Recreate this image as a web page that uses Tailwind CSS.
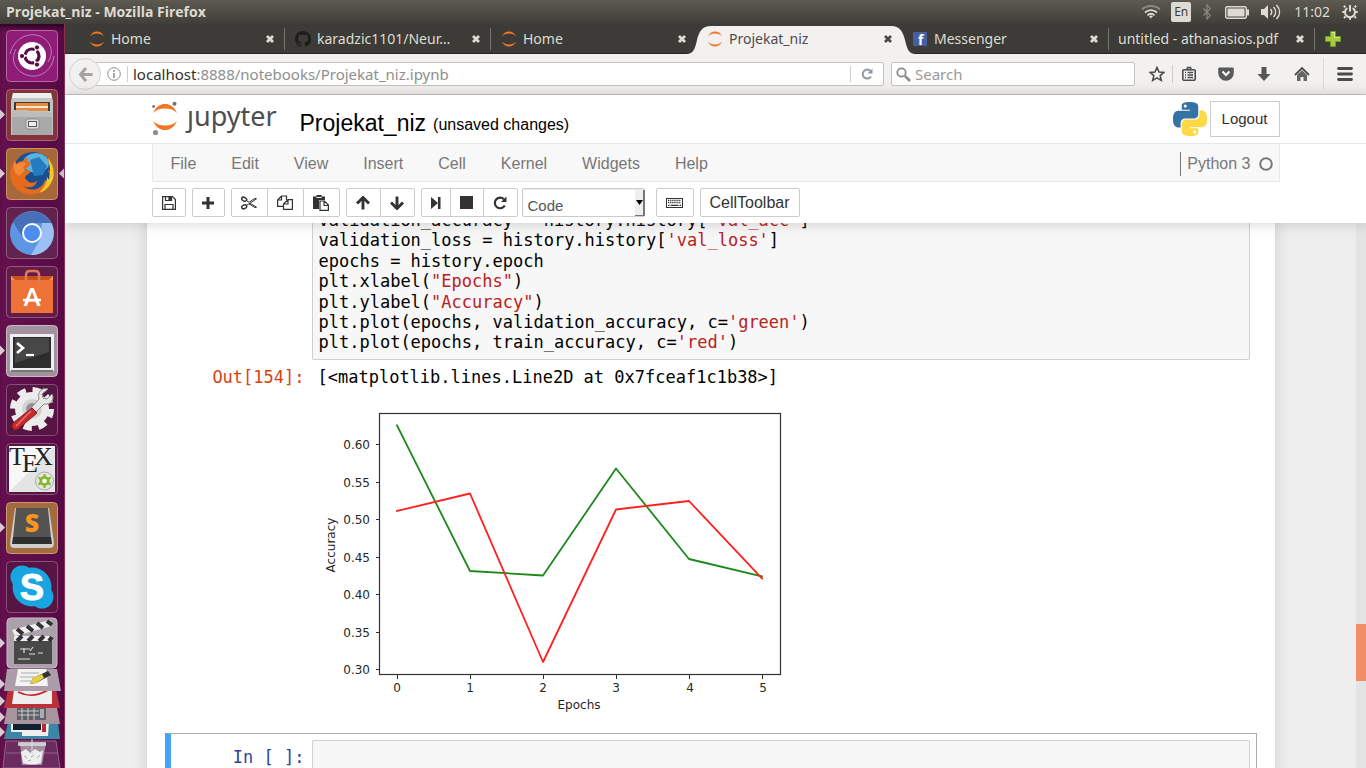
<!DOCTYPE html>
<html lang="en">
<head>
<meta charset="utf-8">
<title>Projekat_niz - Mozilla Firefox</title>
<script src="https://cdn.jsdelivr.net/npm/@tailwindcss/browser@4"></script>
</head>
<body class="h-screen flex flex-col overflow-hidden bg-[#eeeeee] font-['Noto_Sans',sans-serif] text-sm">

<svg class="hidden" aria-hidden="true">
  <symbol id="jup" viewBox="0 0 16 16">
    <path fill="#f37726" d="M1 5.6C2.3 2.3 4.900 .4 8 .4s5.700 1.900 7 5.200C13.300 3.800 11 2.500 8 2.500S2.700 3.800 1 5.600z"/>
    <path fill="#f37726" d="M1 10.400c1.300 3.300 3.900 5.200 7 5.200s5.700-1.900 7-5.200c-1.700 1.800-4 3.100-7 3.100s-5.300-1.300-7-3.100z"/>
  </symbol>
  <symbol id="x" viewBox="0 0 10 10"><path d="M2 2l6 6M8 2l-6 6" stroke="currentColor" stroke-width="2.800"/></symbol>
  <linearGradient id="glass" x1="0" y1="0" x2="0" y2="1"><stop offset="0" stop-color="#fff" stop-opacity=".45"/><stop offset=".5" stop-color="#fff" stop-opacity=".12"/><stop offset="1" stop-color="#fff" stop-opacity=".1"/></linearGradient>
</svg>

<header class="h-6 shrink-0 flex items-center justify-between bg-linear-to-b from-[#5d5a50] to-[#3f3e39] pl-[6px] pr-2 text-[#dfdbd2]">
  <h1 class="font-bold text-sm font-['Open_Sans',sans-serif]">Projekat_niz - Mozilla Firefox</h1>
  <div class="flex items-center">
    <svg class="w-5 h-4 mr-[10px]" viewBox="0 0 20 16" fill="none" stroke="#dfdbd2" stroke-width="1.800"><path d="M1 5.500C6 .8 14 .8 19 5.500" stroke="#8d897f"/><path d="M4 8.500c3.500-3.300 8.500-3.300 12 0"/><path d="M6.500 11.300c2.200-2 4.800-2 7 0"/><path d="M10 14.500l-2-2.300c1.300-1 2.700-1 4 0z" fill="#dfdbd2" stroke="none"/></svg>
    <span class="w-5 h-5 rounded-xs bg-[#dfdbd2] text-[#3f3e39] text-xs leading-5 text-center mr-3">En</span>
    <svg class="w-2 h-4 mr-[14px]" viewBox="0 0 8 16" fill="none" stroke="#8d897f" stroke-width="1.200"><path d="M.5 4.500l7 7L4 15V1l3.500 3.500-7 7"/></svg>
    <svg class="w-6 h-4 mr-3" viewBox="0 0 24 16"><rect x=".7" y="2.700" width="20.600" height="11.600" rx="1.500" fill="none" stroke="#dfdbd2" stroke-width="1.400"/><rect x="2.500" y="4.500" width="17" height="8" fill="#dfdbd2"/><path d="M22 5.500h2v6h-2z" fill="#dfdbd2"/></svg>
    <svg class="w-5 h-4 mr-[13px]" viewBox="0 0 20 16"><path d="M0 5h3l4-4v14l-4-4H0z" fill="#dfdbd2"/><path d="M9.500 5c1.500 1.800 1.500 4.200 0 6M12.500 3c2.800 3 2.800 7 0 10M15.500 1c4 4.300 4 9.700 0 14" fill="none" stroke="#dfdbd2" stroke-width="1.500"/></svg>
    <time class="mr-3">11:02</time>
    <svg class="w-4 h-4" viewBox="0 0 16 16" fill="none" stroke="#dfdbd2"><path d="M5.300 4a5 5 0 1 0 5.400 0" stroke-width="2"/><path d="M8 1v6.500" stroke-width="2"/><path d="M3.300 3.300L1.800 1.800M12.700 3.300l1.500-1.500M2.500 8H.3M13.500 8h2.200M3.500 12.500l-1.500 1.500M12.500 12.500l1.500 1.500M8 13.500v2.300" stroke-width="2"/></svg>
  </div>
</header>

<div class="flex-1 min-h-0 flex">

<nav aria-label="Launcher" class="w-[65px] shrink-0 bg-[#5a0c47] bg-linear-to-r from-[#64104e] to-[#580a45] border-r border-[#8d2f52] shadow-[inset_0_6px_5px_-3px_#2a0520] flex flex-col items-center gap-[7px] pt-[6px] pr-0 relative overflow-hidden">
  <button aria-label="Dash" class="w-[52px] h-[52px] shrink-0"><svg viewBox="0 0 52 52"><rect x=".5" y=".5" width="51" height="51" rx="4" fill="#8f1d78" stroke="#b766a6"/><rect x="1" y="1" width="50" height="50" rx="4" fill="url(#glass)"/><path d="M4 24C8 8 22 2 34 6c10 4 15 16 8 26M48 26c-2 16-16 23-27 19C9 41 4 30 10 19" stroke="#c27fb5" fill="none" stroke-width="1"/><circle cx="26" cy="26" r="14" fill="#fff"/><circle cx="26" cy="26" r="7" fill="none" stroke="#5a0c47" stroke-width="3.200" stroke-dasharray="12.600 2" stroke-dashoffset="6"/><circle cx="16" cy="26" r="2.600" fill="#5a0c47" stroke="#fff"/><circle cx="31" cy="17.400" r="2.600" fill="#5a0c47" stroke="#fff"/><circle cx="31" cy="34.600" r="2.600" fill="#5a0c47" stroke="#fff"/></svg></button>
  <button aria-label="Files" class="w-[52px] h-[52px] shrink-0"><svg viewBox="0 0 52 52"><rect x=".5" y=".5" width="51" height="51" rx="4" fill="#84333c" stroke="#a86a72"/><rect x="1" y="1" width="50" height="50" rx="4" fill="url(#glass)"/><path d="M7 4h38l2 8v34H5V12z" fill="#c4c4c4"/><path d="M7 4h38l1 5H6z" fill="#ededed"/><path d="M8 13h36v9H8z" fill="#3b3b3b"/><path d="M10 14h32v8H10z" fill="#e58a3d"/><path d="M10 17h32v2H10z" fill="#f7e4cd"/><path d="M6 21h16l2 2h22v23H6z" fill="#a9a9a9"/><path d="M6 21h16l2 2h22v5H6z" fill="#bcbcbc"/><rect x="20" y="30" width="13" height="10" rx="2" fill="#dedede" stroke="#8b8b8b"/><rect x="22.500" y="32.500" width="8" height="5" fill="#eee" stroke="#555"/></svg></button>
  <button aria-label="Firefox" class="w-[52px] h-[52px] shrink-0"><svg viewBox="0 0 52 52"><rect x=".5" y=".5" width="51" height="51" rx="4" fill="#a8683a" stroke="#c69667"/><rect x="1" y="1" width="50" height="50" rx="4" fill="url(#glass)" opacity=".5"/><circle cx="27" cy="24" r="20" fill="#1b4e90"/><ellipse cx="30" cy="15" rx="13" ry="10" fill="#5ab4e2"/><path d="M24 12l9-3 8 9-4 9-9 1z" fill="#247cc0"/><path d="M43 11c6 9 5 21-2 28-9 10-24 10-32 0C2 31 3 20 9 12l1 4c2-2 4-3 7-3l4-4c0 4 1 5 4 6-1 3-4 4-6 6 2 2 4 2 6 2-1 3-5 3-6 7 3 5 8 6 12 3-1 7-11 8-15 4 8 8 20 5 23-5 2 1 2 3 2 4 3-4 3-10 1-14l2 1c0-5-1-8-2-11z" fill="#e56a1c"/><path d="M42 10c7 8 8 20 1 28-3 4-7 6-10 7 5-5 8-10 8-16l2 3c2-8 1-14-1-22z" fill="#f8c928"/><path d="M9 13l1 4c3-2 6-3 8-3l2 2-3 3 2 3-6 6c-5-3-7-8-4-15z" fill="#f38a35"/></svg></button>
  <button aria-label="Chromium" class="w-[52px] h-[52px] shrink-0"><svg viewBox="0 0 52 52"><rect x=".5" y=".5" width="51" height="51" rx="4" fill="#63234f" stroke="#8f5c80"/><rect x="1" y="1" width="50" height="50" rx="4" fill="url(#glass)"/><circle cx="26" cy="26" r="22" fill="#5e96e4"/><path d="M7 15A22 22 0 0 1 45 16H26L17 31z" fill="#466fb7"/><path d="M45.300 16A22 22 0 0 1 25 48l10-17 1-15z" fill="#9cc0f5"/><circle cx="26" cy="26" r="10" fill="#fff"/><circle cx="26" cy="26" r="8" fill="#4d8bee"/></svg></button>
  <button aria-label="Ubuntu Software" class="w-[52px] h-[52px] shrink-0"><svg viewBox="0 0 52 52"><rect x=".5" y=".5" width="51" height="51" rx="4" fill="#641c46" stroke="#8f5c80"/><rect x="1" y="1" width="50" height="50" rx="4" fill="url(#glass)"/><path d="M5 10h42v10H5z" fill="#c9521c"/><path d="M5 14h42v33H5z" fill="#ee7136"/><path d="M5 10l4 4H5zM47 10l-4 4h4z" fill="#f29663"/><path d="M20 18V9q0-4 4-4h5q4 0 4 4v9" fill="none" stroke="#de7a58" stroke-width="2.500"/><text x="26" y="40" text-anchor="middle" font-family="Lato,sans-serif" font-weight="bold" font-size="24" fill="#fff">A</text><path d="M17 34h18" stroke="#fff" stroke-width="2.500"/></svg></button>
  <button aria-label="Terminal" class="w-[52px] h-[52px] shrink-0"><svg viewBox="0 0 52 52"><rect x=".5" y=".5" width="51" height="51" rx="4" fill="#a2929f" stroke="#c6bbc4"/><rect x="1" y="1" width="50" height="50" rx="4" fill="url(#glass)"/><path d="M4 9h44v37H4z" fill="#eee"/><path d="M5 45h42v2H5z" fill="#777"/><path d="M7 12h38v31H7z" fill="#2d2d2d"/><path d="M9 13h34v14L9 38z" fill="#474747"/><path d="M11 18l6 5-6 5" fill="none" stroke="#fff" stroke-width="2.600"/><path d="M20 30h8" stroke="#fff" stroke-width="2.200"/></svg></button>
  <button aria-label="System Settings" class="w-[52px] h-[52px] shrink-0"><svg viewBox="0 0 52 52"><rect x=".5" y=".5" width="51" height="51" rx="4" fill="#561542" stroke="#85507a"/><rect x="1" y="1" width="50" height="50" rx="4" fill="url(#glass)"/><circle cx="26" cy="25" r="18.500" fill="none" stroke="#ececec" stroke-width="7" stroke-dasharray="8 6.530"/><circle cx="26" cy="25" r="13.500" fill="#d2d2d2" stroke="#ececec" stroke-width="7"/><circle cx="26" cy="25" r="6" fill="#9c8d99"/><path d="M42 5l-6 5 1 4 4 1 5-5c3 5-1 11-8 10L24 34l-4-4 13-15c-2-7 3-12 9-10z" fill="#e6e6e6" stroke="#8c8c8c"/><path d="M26 24l5 5-19 16c-4 3-8-2-5-6z" fill="#c52a2e" stroke="#8d171c"/><path d="M25 27L10 42" stroke="#ec7377" stroke-width="1.500"/></svg></button>
  <button aria-label="TeX editor" class="w-[52px] h-[52px] shrink-0"><svg viewBox="0 0 52 52"><rect x=".5" y=".5" width="51" height="51" rx="4" fill="#561542" stroke="#85507a"/><path d="M3 3h46v46H3z" fill="#e4e4e4"/><path d="M3 3h46L3 49z" fill="#f7f7f7"/><g font-family="Liberation Serif,serif" font-size="26" fill="#222"><text x="3" y="22">T</text><text x="16" y="29">E</text><text x="28" y="22">X</text></g><circle cx="38.500" cy="38" r="9" fill="#e5e5e5" stroke="#aaa"/><circle cx="38.500" cy="38" r="3.600" fill="none" stroke="#86b92b" stroke-width="3"/><path d="M38.500 31v14M32.400 34.500l12.200 7M44.600 34.500l-12.200 7" stroke="#86b92b" stroke-width="2.200"/><circle cx="38.500" cy="38" r="2.300" fill="#fff"/></svg></button>
  <button aria-label="Sublime Text" class="w-[52px] h-[52px] shrink-0"><svg viewBox="0 0 52 52"><rect x=".5" y=".5" width="51" height="51" rx="4" fill="#a56b3d" stroke="#c59b72"/><rect x="1" y="1" width="50" height="50" rx="4" fill="url(#glass)" opacity=".6"/><path d="M9 6h34l5 35q0 5-4 5H8q-4 0-4-5z" fill="#cfcfcf"/><path d="M10 6h32l3 30H7z" fill="#535353"/><path d="M7 35h38l1 7H6z" fill="#2f2f2f"/><text x="26" y="30" text-anchor="middle" font-family="Open Sans,sans-serif" font-weight="800" font-size="25" fill="#f99420">S</text></svg></button>
  <button aria-label="Skype" class="w-[52px] h-[52px] shrink-0"><svg viewBox="0 0 52 52"><rect x=".5" y=".5" width="51" height="51" rx="4" fill="#561542" stroke="#85507a"/><rect x="1" y="1" width="50" height="50" rx="4" fill="url(#glass)" opacity=".6"/><circle cx="26" cy="26" r="19.500" fill="#19a5e1"/><circle cx="16" cy="16" r="11.500" fill="#19a5e1"/><circle cx="36" cy="36" r="11.500" fill="#19a5e1"/><text x="26" y="39" text-anchor="middle" font-family="Liberation Sans,sans-serif" font-weight="bold" font-size="36" fill="#fff" stroke="#fff">S</text></svg></button>
  <svg role="img" aria-label="Folded launcher items" class="w-[64px] h-[151px] shrink-0 -mt-[3px]" viewBox="0 617 64 151">
    <path d="M6 741h50l4 27H3z" fill="#6b2b5f" stroke="#93638a"/><path d="M6 753h52" stroke="#93638a"/>
    <path d="M20 743h26l-4 22H22z" fill="#a58da0"/><path d="M18 742h28v4H18z" fill="#ddd" opacity=".8"/><path d="M21 752l5-3 4 4 5-4 5 3 3-2-2 13q-9 3-18 0z" fill="#eee"/><path d="M24 756l3 2M31 757l3-2M37 758l3-3M28 761l3-1" stroke="#b5a8b2"/><path d="M32 737v17" stroke="#e5d5e2"/>
    <path d="M8 723h50l2 16H4z" fill="#3a86a5"/><path d="M11 722h38l-1 14H22v-4H11z" fill="#eee"/><path d="M13 722h28v8H13z" fill="#102030"/><path d="M42 722h4v10h-4z" fill="#b32b2b"/>
    <path d="M7 708h50l3 16H4z" fill="#a8939f"/><path d="M17 708h29v12H17z" fill="#5f6066"/><path d="M18 711h21M18 715h21M22 708v12M28 708v12M34 708v12" stroke="#ccc"/><path d="M40 709h4v9h-4z" fill="#aab"/>
    <path d="M8 690h48l4 18H4z" fill="#b9323a"/><path d="M14 690h38v14H12z" fill="#eee"/><path d="M18 692c10 5 20 4 30-2" fill="none" stroke="#c22" stroke-width="1.500"/>
    <path d="M7 669h50l4 22H4z" fill="#ad9dab"/><path d="M18 669h28l2 17H15z" fill="#f3f3f3"/><path d="M21 673h18M20 677h14M20 681h11" stroke="#aaa"/><path d="M30 684l3-6 15-7 3 4-15 8z" fill="#333"/><path d="M30 684l3-6 9-4 2 4-8 5z" fill="#e8cf3e"/>
    <rect x="7" y="618" width="50" height="50" rx="4" fill="#aca0aa" stroke="#c8bec6"/><path d="M14 637h38v27H14z" fill="#484848"/><path d="M14 636h38v5H14z" fill="#eee"/><path d="M12 630l38-10 2 6-37 10z" fill="#eee"/><path d="M17 629l6 5M27 626l6 5M37 623l6 5M47 621l5 4M17 641l5-5M28 641l5-5M39 641l5-5M49 641l3-4" stroke="#333" stroke-width="4"/><path d="M20 649h10M24 648v5M30 651l3-4M29 654h6M38 653h5M18 659h12" stroke="#ddd" stroke-width="1.200"/>
  </svg>
  <svg class="absolute left-0 top-0 w-[64px] h-[744px]" aria-hidden="true" viewBox="0 24 64 744" fill="#d6cbd3"><path d="M0 109.500l5 5-5 5zM0 168.500l5 5-5 5zM64 168.500l-5 5 5 5zM0 345.500l5 5-5 5zM0 522.500l5 5-5 5zM0 638l5 5-5 5zM0 679l5 5-5 5zM0 696l5 5-5 5zM0 712l5 5-5 5zM0 727l5 5-5 5z"/></svg>
</nav>

<div class="flex-1 min-w-0 flex flex-col">

  <div role="tablist" class="h-[30px] shrink-0 flex items-center bg-[#3c3b37] border-b border-[#282724] pt-px pl-[14px] text-[#dfdbd2] leading-5">
    <div role="tab" class="w-[206px] h-[22px] flex items-center pl-[10px] pr-[9px] border-r border-[#77756f]"><svg class="w-4 h-4 mr-[6px]"><use href="#jup"/></svg><span class="flex-1">Home</span><button aria-label="Close"><svg class="w-[10px] h-[10px]"><use href="#x"/></svg></button></div>
    <div role="tab" class="w-[206px] h-[22px] flex items-center pl-[10px] pr-[9px] border-r border-[#77756f]"><svg class="w-4 h-4 mr-[6px]" viewBox="0 0 16 16" fill="#1d1d1b"><path d="M8 0C3.580 0 0 3.580 0 8c0 3.540 2.290 6.530 5.470 7.590.4.070.55-.17.55-.38 0-.19-.01-.82-.01-1.490-2.010.37-2.530-.49-2.690-.94-.09-.23-.48-.94-.82-1.130-.28-.15-.68-.52-.01-.53.63-.01 1.080.58 1.230.82.72 1.210 1.870.87 2.330.66.070-.52.28-.87.51-1.070-1.780-.2-3.640-.89-3.640-3.950 0-.87.31-1.590.82-2.150-.08-.2-.36-1.020.08-2.120 0 0 .67-.21 2.200.82.64-.18 1.320-.27 2-.27s1.360.09 2 .27c1.530-1.040 2.200-.82 2.200-.82.44 1.100.16 1.920.08 2.120.51.56.82 1.270.82 2.150 0 3.070-1.870 3.750-3.650 3.950.29.25.54.73.54 1.480 0 1.070-.01 1.930-.01 2.200 0 .21.15.46.55.38A8.010 8.010 0 0 0 16 8c0-4.420-3.580-8-8-8z"/></svg><span class="flex-1">karadzic1101/Neur…</span><button aria-label="Close"><svg class="w-[10px] h-[10px]"><use href="#x"/></svg></button></div>
    <div role="tab" class="w-[206px] h-[22px] flex items-center pl-[10px] pr-[10px]"><svg class="w-4 h-4 mr-[6px]"><use href="#jup"/></svg><span class="flex-1">Home</span><button aria-label="Close"><svg class="w-[10px] h-[10px]"><use href="#x"/></svg></button></div>
    <div role="tab" aria-selected="true" class="relative z-10 w-[206px] h-[22px] flex items-center pl-[10px] pr-[10px] text-[#4c4c4c]">
      <svg class="absolute -left-[11px] -top-[2px] w-[230px] h-[28px] -z-10" viewBox="0 0 230 28"><path d="M0 28c8 0 9-6 11-14S16 0 25 0h180c9 0 12 6 14 14s3 14 11 14z" fill="#f2f1f0"/></svg>
      <svg class="w-4 h-4 mr-[6px]"><use href="#jup"/></svg><span class="flex-1">Projekat_niz</span><button aria-label="Close"><svg class="w-[10px] h-[10px]"><use href="#x"/></svg></button></div>
    <div role="tab" class="w-[206px] h-[22px] flex items-center pl-[9px] pr-[9px] border-r border-[#77756f]"><svg class="w-4 h-4 mr-[6px] overflow-visible" viewBox="0 0 16 16"><path d="M1 1h14v14H1z" fill="#4460a0"/><text x="6" y="14" font-family="Open Sans,sans-serif" font-weight="bold" font-size="14" fill="#fff">f</text></svg><span class="flex-1">Messenger</span><button aria-label="Close"><svg class="w-[10px] h-[10px]"><use href="#x"/></svg></button></div>
    <div role="tab" class="w-[206px] h-[22px] flex items-center pl-[9px] pr-[9px] border-r border-[#77756f]"><span class="flex-1 whitespace-nowrap">untitled - athanasios.pdf</span><button aria-label="Close"><svg class="w-[10px] h-[10px]"><use href="#x"/></svg></button></div>
    <button aria-label="New tab" class="ml-[10px]"><svg class="w-4 h-4" viewBox="0 0 16 16"><path d="M5.500.5h5v5h5v5h-5v5h-5v-5h-5v-5h5z" fill="#a5cb3c" stroke="#6c9a22"/><path d="M6.500 1.500h3v5h5" fill="none" stroke="#d5ea8d"/></svg></button>
  </div>

  <div class="h-[41px] shrink-0 flex items-center bg-[#f2f1f0] border-b border-[#cbc8c3] pl-1 text-[#4c4c4c]">
    <button aria-label="Back" class="w-8 h-8 shrink-0 z-10 rounded-full border border-[#d5d2ce] bg-[#f2f1f0] flex items-center justify-center"><svg class="w-[15px] h-[15px]" viewBox="0 0 15 15" fill="none" stroke="#a6a4a1" stroke-width="3"><path d="M8 1L2.500 7.500 8 14M3 7.500h11.500"/></svg></button>
    <div class="flex-1 h-6 -ml-[6px] flex items-center bg-white border border-[#c6c2bd] rounded-xs pl-[11px]">
      <svg class="w-[14px] h-[14px] shrink-0" viewBox="0 0 14 14" fill="none" stroke="#8c8c8c"><circle cx="7" cy="7" r="6.300"/><path d="M7 6v5M7 3v1.700" stroke-width="1.600"/></svg>
      <div class="ml-[6px] h-4 border-l border-[#cfcfcf]"></div>
      <a href="#" class="flex-1 ml-[5px] text-[15px] leading-5 text-[#8e8e8e]"><span class="text-[#2f2f2f]">localhost</span>:8888/notebooks/Projekat_niz.ipynb</a>
      <div class="h-4 border-l border-[#cfcfcf]"></div>
      <button aria-label="Reload" class="px-[10px]"><svg class="w-3 h-3" viewBox="0 0 12 12"><path d="M10 8.500A4.500 4.500 0 1 1 9.500 3" fill="none" stroke="#8e99a4" stroke-width="2"/><path d="M11.500.5v5h-5z" fill="#8e99a4"/></svg></button>
    </div>
    <label class="w-[244px] h-6 ml-[7px] flex items-center bg-white border border-[#c6c2bd] rounded-xs pl-1">
      <svg class="w-[15px] h-[15px] shrink-0" viewBox="0 0 15 15" fill="none" stroke="#8a8a8a"><circle cx="5.500" cy="5.500" r="4.200" stroke-width="1.800"/><path d="M9 9l5 5" stroke-width="2.600"/></svg>
      <input type="text" aria-label="Search" placeholder="Search" class="flex-1 min-w-0 ml-1 text-[15px] leading-5 outline-none placeholder:text-[#999999]">
    </label>
    <button aria-label="Bookmark" class="w-[30px] ml-[7px] flex justify-center"><svg class="w-4 h-4" viewBox="0 0 16 16" fill="none" stroke="#4c4c4c" stroke-width="1.600"><path d="M8 1.500l2 4.500 4.800.4-3.600 3.200 1.100 4.800L8 11.900l-4.300 2.500 1.100-4.800L1.200 6.400 6 6z"/></svg></button>
    <button aria-label="Bookmarks list" class="w-[35px] h-[18px] border-l border-[#d0cdc9] flex pl-2 items-center"><svg class="w-4 h-4" viewBox="0 0 16 16" fill="none" stroke="#4c4c4c" stroke-width="1.600"><rect x="1.800" y="3.800" width="12.400" height="10.400" rx="1"/><path d="M5 3.500h1.500V1.500h3v2H11" /><path d="M4 6.500h1M6.500 6.500H12M4 9h1M6.500 9H12M4 11.500h1M6.500 11.500H12" stroke-width="1.300"/></svg></button>
    <button aria-label="Pocket" class="w-[38px] flex justify-center"><svg class="w-4 h-4" viewBox="0 0 16 16"><path d="M1.500 1.500h13q1.300 0 1.300 1.300V7a7.800 7.800 0 0 1-15.600 0V2.800q0-1.300 1.300-1.300z" fill="#5a5a5a"/><path d="M4.500 5.500L8 9l3.500-3.500" fill="none" stroke="#fff" stroke-width="2"/></svg></button>
    <button aria-label="Downloads" class="w-[38px] flex justify-center"><svg class="w-4 h-4" viewBox="0 0 16 16"><path d="M5.500 1h5v7h4L8 15 1.500 8h4z" fill="#555"/></svg></button>
    <button aria-label="Home page" class="w-[38px] flex justify-center"><svg class="w-4 h-4" viewBox="0 0 16 16"><path d="M1 9l7-7 7 7" fill="none" stroke="#4f4f4f" stroke-width="1.800"/><path d="M3 9l5-4.800L13 9v6H9.500v-4h-3v4H3z" fill="#666"/></svg></button>
    <button aria-label="Open menu" class="w-[43px] ml-[2px] h-8 flex justify-center items-center border-l border-[#dedbd7]"><svg class="w-4 h-4" viewBox="0 0 16 16" stroke="#4c4c4c" stroke-width="2.800" stroke-linecap="round"><path d="M1.500 2.500h13M1.500 8h13M1.500 13.500h13"/></svg></button>
  </div>

  <div class="relative z-10 shrink-0 bg-white shadow-[0_0_12px_1px_rgba(87,87,87,0.25)] font-['Liberation_Sans',sans-serif] text-base pb-[6px]">
    <div class="border-b border-[#e7e7e7]">
      <div class="w-full max-w-[1128px] mx-auto h-12 flex items-center text-black">
        <a href="#" aria-label="jupyter home" class="block shrink-0"><svg class="w-[126px] h-9" viewBox="0 0 126 36">
          <path d="M1 12C4 5.500 8 3 13 3s9 2.500 12 9c-3-3.300-7-4.500-12-4.500S4 8.700 1 12zM1 20c3 6.500 7 9 12 9s9-2.500 12-9c-3 3.300-7 4.500-12 4.500S4 23.300 1 20z" fill="#f37726"/>
          <circle cx="22.500" cy="2.800" r="2" fill="#6f7070"/><circle cx="3.500" cy="31.500" r="2.600" fill="#8e8e8e"/><circle cx="1.600" cy="5.500" r="1.400" fill="#767677"/>
          <text x="35" y="25" font-family="Noto Sans,sans-serif" font-size="27" fill="#4e4e4e">jupyter</text><path d="M34 0h10v8.500H34z" fill="#fff"/></svg></a>
        <h2 class="ml-[22px] mt-2 text-[23px] leading-7">Projekat_niz</h2>
        <span class="ml-[7px] mt-3 flex-1">(unsaved changes)</span>
        <svg role="img" aria-label="Python" class="w-[34px] h-[34px] mr-[3px]" viewBox="0 0 24 24"><path fill="#3572a5" d="M14.250.18l.9.2.73.26.59.3.45.32.34.34.25.34.16.33.1.3.04.26.02.2-.01.13V8.500l-.05.63-.13.55-.21.46-.26.38-.3.31-.33.25-.35.19-.35.14-.33.1-.3.07-.26.04-.21.02H8.770l-.69.05-.59.14-.5.22-.41.27-.33.32-.27.35-.2.36-.15.37-.1.35-.07.32-.04.27-.02.21v3.060H3.170l-.21-.03-.28-.07-.32-.12-.35-.18-.36-.26-.36-.36-.35-.46-.32-.59-.28-.73-.21-.88-.14-1.050-.05-1.230.06-1.220.16-1.040.24-.87.32-.71.36-.57.4-.44.42-.33.42-.24.4-.16.36-.1.32-.05.24-.01h.16l.06.01h8.160v-.83H6.180l-.01-2.750-.02-.37.05-.34.11-.31.17-.28.25-.26.31-.23.38-.2.44-.18.51-.15.58-.12.64-.1.71-.06.77-.04.84-.02 1.270.05zm-6.300 1.980l-.23.33-.08.41.08.41.23.34.33.22.41.09.41-.09.33-.22.23-.34.08-.41-.08-.41-.23-.33-.33-.22-.41-.09-.41.09z"/><path fill="#ffd845" d="M21.040 6.110l.28.06.32.12.35.18.36.27.36.35.35.47.32.59.28.73.21.88.14 1.040.05 1.230-.06 1.230-.16 1.040-.24.86-.32.71-.36.57-.4.45-.42.33-.42.24-.4.16-.36.09-.32.05-.24.02-.16-.01h-8.220v.82h5.840l.01 2.760.02.36-.05.34-.11.31-.17.29-.25.25-.31.24-.38.2-.44.17-.51.15-.58.13-.64.09-.71.07-.77.04-.84.01-1.270-.04-1.070-.14-.9-.2-.73-.25-.59-.3-.45-.33-.34-.34-.25-.34-.16-.33-.1-.3-.04-.25-.02-.2.01-.13v-5.340l.05-.64.13-.54.21-.46.26-.38.3-.32.33-.24.35-.2.35-.14.33-.1.3-.06.26-.04.21-.02.13-.01h5.840l.69-.05.59-.14.5-.21.41-.28.33-.32.27-.35.2-.36.15-.36.1-.35.07-.32.04-.28.02-.21V6.070h2.090l.14.01zm-6.470 14.250l-.23.33-.08.41.08.41.23.33.33.23.41.08.41-.08.33-.23.23-.33.08-.41-.08-.41-.23-.33-.33-.23-.41-.08-.41.08z"/></svg>
        <button class="w-[70px] h-9 pt-px border border-[#cccccc] text-[15px] text-[#333333]">Logout</button>
      </div>
    </div>
    <div class="w-full max-w-[1128px] mx-auto">
      <div class="h-[38px] flex items-center bg-[#f8f8f8] border border-t-0 border-[#e7e7e7] rounded-b-xs text-[#777777] pt-[2px] pl-[18px] pr-[6px]">
        <nav aria-label="Notebook menu" class="flex-1 flex gap-[35px]"><a href="#">File</a><a href="#">Edit</a><a href="#">View</a><a href="#">Insert</a><a href="#">Cell</a><a href="#">Kernel</a><a href="#">Widgets</a><a href="#">Help</a></nav>
        <span class="border-l border-[#777777] pl-[6px] mr-[8px]">Python 3</span>
        <svg role="img" aria-label="Kernel idle" class="w-[14px] h-[14px]" viewBox="0 0 14 14"><circle cx="7" cy="7" r="5.800" fill="none" stroke="#777" stroke-width="2"/></svg>
      </div>
      <div class="mt-[6px] flex text-[#333333]">
        <button aria-label="Save" class="w-[34px] h-[29px] border border-[#cccccc] rounded-xs flex items-center justify-center"><svg class="w-[14px] h-[14px]" viewBox="0 0 14 14" fill="none" stroke="#333" stroke-width="1.200"><path d="M.6.6h9.900l2.900 2.900v9.900H.6z"/><path d="M3 13V8.500h8V13M3.500 1v3.500h6V1"/><path d="M7 1h1.500v2.500H7z" fill="#333"/></svg></button>
        <button aria-label="Insert cell below" class="w-[33px] h-[29px] ml-[6px] border border-[#cccccc] rounded-xs flex items-center justify-center"><svg class="w-3 h-3" viewBox="0 0 12 12" stroke="#333" stroke-width="3"><path d="M0 6h12M6 0v12"/></svg></button>
        <div class="ml-[6px] flex border border-[#cccccc] rounded-xs h-[29px] divide-x divide-[#cccccc]">
          <button aria-label="Cut" class="w-9 flex items-center justify-center"><svg class="w-4 h-[14px]" viewBox="0 0 16 14" fill="none" stroke="#333" stroke-width="1"><ellipse cx="3.200" cy="3.200" rx="2.600" ry="1.800" transform="rotate(25 3.200 3.200)" stroke-width="1.500"/><ellipse cx="3.200" cy="10.800" rx="2.600" ry="1.800" transform="rotate(-25 3.200 10.800)" stroke-width="1.500"/><path d="M5.300 4.500L8 6.200l6-3.800 1.500.4L8 8M5.300 9.500L8 7.800l6 3.800 1.500-.4L8.500 7"/></svg></button>
          <button aria-label="Copy" class="w-9 flex items-center justify-center"><svg class="w-4 h-4" viewBox="0 0 16 16" fill="none" stroke="#333" stroke-width="1.200"><path d="M6.500 11.400H.6V5L4.500 1h5v4M4.500 1v4H.6"/><path d="M6.500 9L11 4.600h4.400v9.800H6.500zM11 4.600V9H6.500"/></svg></button>
          <button aria-label="Paste" class="w-[35px] flex items-center justify-center"><svg class="w-4 h-4" viewBox="0 0 16 16"><path d="M0 1.500h3.500V0h5v1.500H12V5H6v9H0z" fill="#333"/><path d="M3.500 2.500h5" stroke="#fff" stroke-width="1"/><path d="M7 6h4.500l3.900 4v5.400H7zM11 6v4.500h4.400" fill="#fff" stroke="#333" stroke-width="1.200"/></svg></button>
        </div>
        <div class="ml-[6px] flex border border-[#cccccc] rounded-xs h-[29px] divide-x divide-[#cccccc]">
          <button aria-label="Move up" class="w-[34px] flex items-center justify-center"><svg class="w-[14px] h-[14px]" viewBox="0 0 14 14" fill="none" stroke="#333" stroke-width="2.900"><path d="M1 7.500l6-6 6 6M7 2v11.500"/></svg></button>
          <button aria-label="Move down" class="w-[33px] flex items-center justify-center"><svg class="w-[14px] h-[14px]" viewBox="0 0 14 14" fill="none" stroke="#333" stroke-width="2.900"><path d="M1 6.500l6 6 6-6M7 12V.5"/></svg></button>
        </div>
        <div class="ml-[6px] flex border border-[#cccccc] rounded-xs h-[29px] divide-x divide-[#cccccc]">
          <button aria-label="Run" class="w-[29px] flex items-center justify-center"><svg class="w-[10px] h-3" viewBox="0 0 10 12"><path d="M0 0l7 6-7 6zM7 0h2.500v12H7z" fill="#333"/></svg></button>
          <button aria-label="Interrupt" class="w-[33px] flex items-center justify-center"><span class="w-[13px] h-[13px] bg-[#333333]"></span></button>
          <button aria-label="Restart" class="w-[33px] flex items-center justify-center"><svg class="w-[14px] h-[14px]" viewBox="0 0 14 14"><path d="M11.800 9.500A5.300 5.300 0 1 1 11 3.300" fill="none" stroke="#333" stroke-width="2.200"/><path d="M13.500.5V6H8z" fill="#333"/></svg></button>
        </div>
        <div class="relative ml-[4px] w-[123px] h-[29px]">
          <select aria-label="Cell type" class="appearance-none w-full h-full border border-[#cccccc] rounded-xs pl-[5px] pt-[6px] text-[15px] leading-5 text-[#555555] bg-white shadow-[inset_0_1px_1px_rgba(0,0,0,0.08)]"><option>Code</option></select>
          <span class="pointer-events-none absolute right-0 top-[2px] w-[10px] h-[26px] bg-[#eeeeee] border-r-2 border-b border-[#777777]"><svg class="w-2 h-[5px] mt-[10px]" viewBox="0 0 8 5"><path d="M1 0h7L4.500 5z" fill="#000"/></svg></span>
        </div>
        <button aria-label="Command palette" class="w-[38px] h-[29px] ml-[11px] border border-[#cccccc] rounded-xs flex items-center justify-center"><svg class="w-[17px] h-[10px]" viewBox="0 0 17 10" fill="none" stroke="#333"><rect x=".5" y=".5" width="16" height="9"/><path d="M2 2.500h13M2 4.700h13" stroke-width="1.300" stroke-dasharray="1.300 .8"/><path d="M2 7.300h1.500M4.500 7.300h8M13.500 7.300H15" stroke-width="1.200"/></svg></button>
        <button class="h-[29px] w-[100px] ml-[6px] pt-px border border-[#cccccc] rounded-xs">CellToolbar</button>
      </div>
    </div>
  </div>

  <main class="flex-1 min-h-0 flex overflow-hidden bg-[#eeeeee]">
    <div class="flex-1 min-w-0 overflow-hidden">
      <div class="w-full max-w-[1128px] min-h-full mx-auto bg-white px-[18px] shadow-[0_0_12px_1px_rgba(87,87,87,0.2)] font-['DejaVu_Sans_Mono',monospace] text-[17px] leading-[1.2] text-black">
        <section class="-mt-[13px] pl-[6px] pr-[7px]">
          <div class="flex">
            <div class="w-[141px] shrink-0"></div>
            <pre class="flex-1 bg-[#f7f7f7] border border-t-0 border-[#cfcfcf] rounded-b-xs pl-[6px] pb-[6px] font-['DejaVu_Sans_Mono',monospace]">validation_accuracy = history.history[<span class="text-[#ba2121]">'val_acc'</span>]
validation_loss = history.history[<span class="text-[#ba2121]">'val_loss'</span>]
epochs = history.epoch
plt.xlabel(<span class="text-[#ba2121]">"Epochs"</span>)
plt.ylabel(<span class="text-[#ba2121]">"Accuracy"</span>)
plt.plot(epochs, validation_accuracy, c=<span class="text-[#ba2121]">'green'</span>)
plt.plot(epochs, train_accuracy, c=<span class="text-[#ba2121]">'red'</span>)</pre>
          </div>
          <div class="flex pt-[7px]">
            <div class="w-[141px] shrink-0 pr-[7px] text-right text-[#d84315]">Out[154]:</div>
            <pre class="pl-[6px] font-['DejaVu_Sans_Mono',monospace]">[&lt;matplotlib.lines.Line2D at 0x7fceaf1c1b38&gt;]</pre>
          </div>
          <svg role="img" aria-label="Accuracy by epoch" class="ml-[141px] mt-[7px] w-[488px] h-[326px]" viewBox="312 394 488 326" font-family="DejaVu Sans,sans-serif" font-size="12" fill="#262626">
            <rect x="379.500" y="413.500" width="401" height="261" fill="none" stroke="#333" stroke-width="1.200"/>
            <path d="M376 444.500h4M376 482.500h4M376 519.500h4M376 557.500h4M376 594.500h4M376 632.500h4M376 669.500h4M397.500 675v4M470.500 675v4M543.500 675v4M616.500 675v4M689.500 675v4M762.500 675v4" stroke="#333"/>
            <g text-anchor="end"><text x="370" y="449">0.60</text><text x="370" y="487">0.55</text><text x="370" y="524">0.50</text><text x="370" y="562">0.45</text><text x="370" y="599">0.40</text><text x="370" y="637">0.35</text><text x="370" y="674">0.30</text></g>
            <g text-anchor="middle"><text x="397" y="692">0</text><text x="470" y="692">1</text><text x="543" y="692">2</text><text x="616" y="692">3</text><text x="690" y="692">4</text><text x="763" y="692">5</text><text x="579" y="709">Epochs</text><text transform="translate(335 545) rotate(-90)">Accuracy</text></g>
            <g fill="none" stroke-width="1.800" stroke-linejoin="round" stroke-linecap="square"><path d="M397 425.500L470 571l73 4.500L616 468.500l73 90.500 73 17.500" stroke="#1b8a1b"/><path d="M397 511l73-17.500L543 662l73-152.500 73-8.500 73 77.500" stroke="#ff2020"/></g>
          </svg>
        </section>
        <section class="mt-[13px] flex border border-[#ababab] border-l-[6px] border-l-[#42a5f5] py-[6px] pr-[6px]">
          <div class="w-[141px] shrink-0 pt-[7px] pr-[7px] text-right text-[#303f9f]">In [ ]:</div>
          <textarea aria-label="Code input" rows="1" class="flex-1 h-[38px] resize-none bg-[#f7f7f7] border border-[#cfcfcf] rounded-xs px-[6px] py-[7px]"></textarea>
        </section>
      </div>
    </div>
    <div class="w-[10px] shrink-0 bg-[#e4e4e4]"><div class="mt-[401px] h-[57px] bg-[#f18d67]"></div></div>
  </main>
</div>
</div>
</body>
</html>
